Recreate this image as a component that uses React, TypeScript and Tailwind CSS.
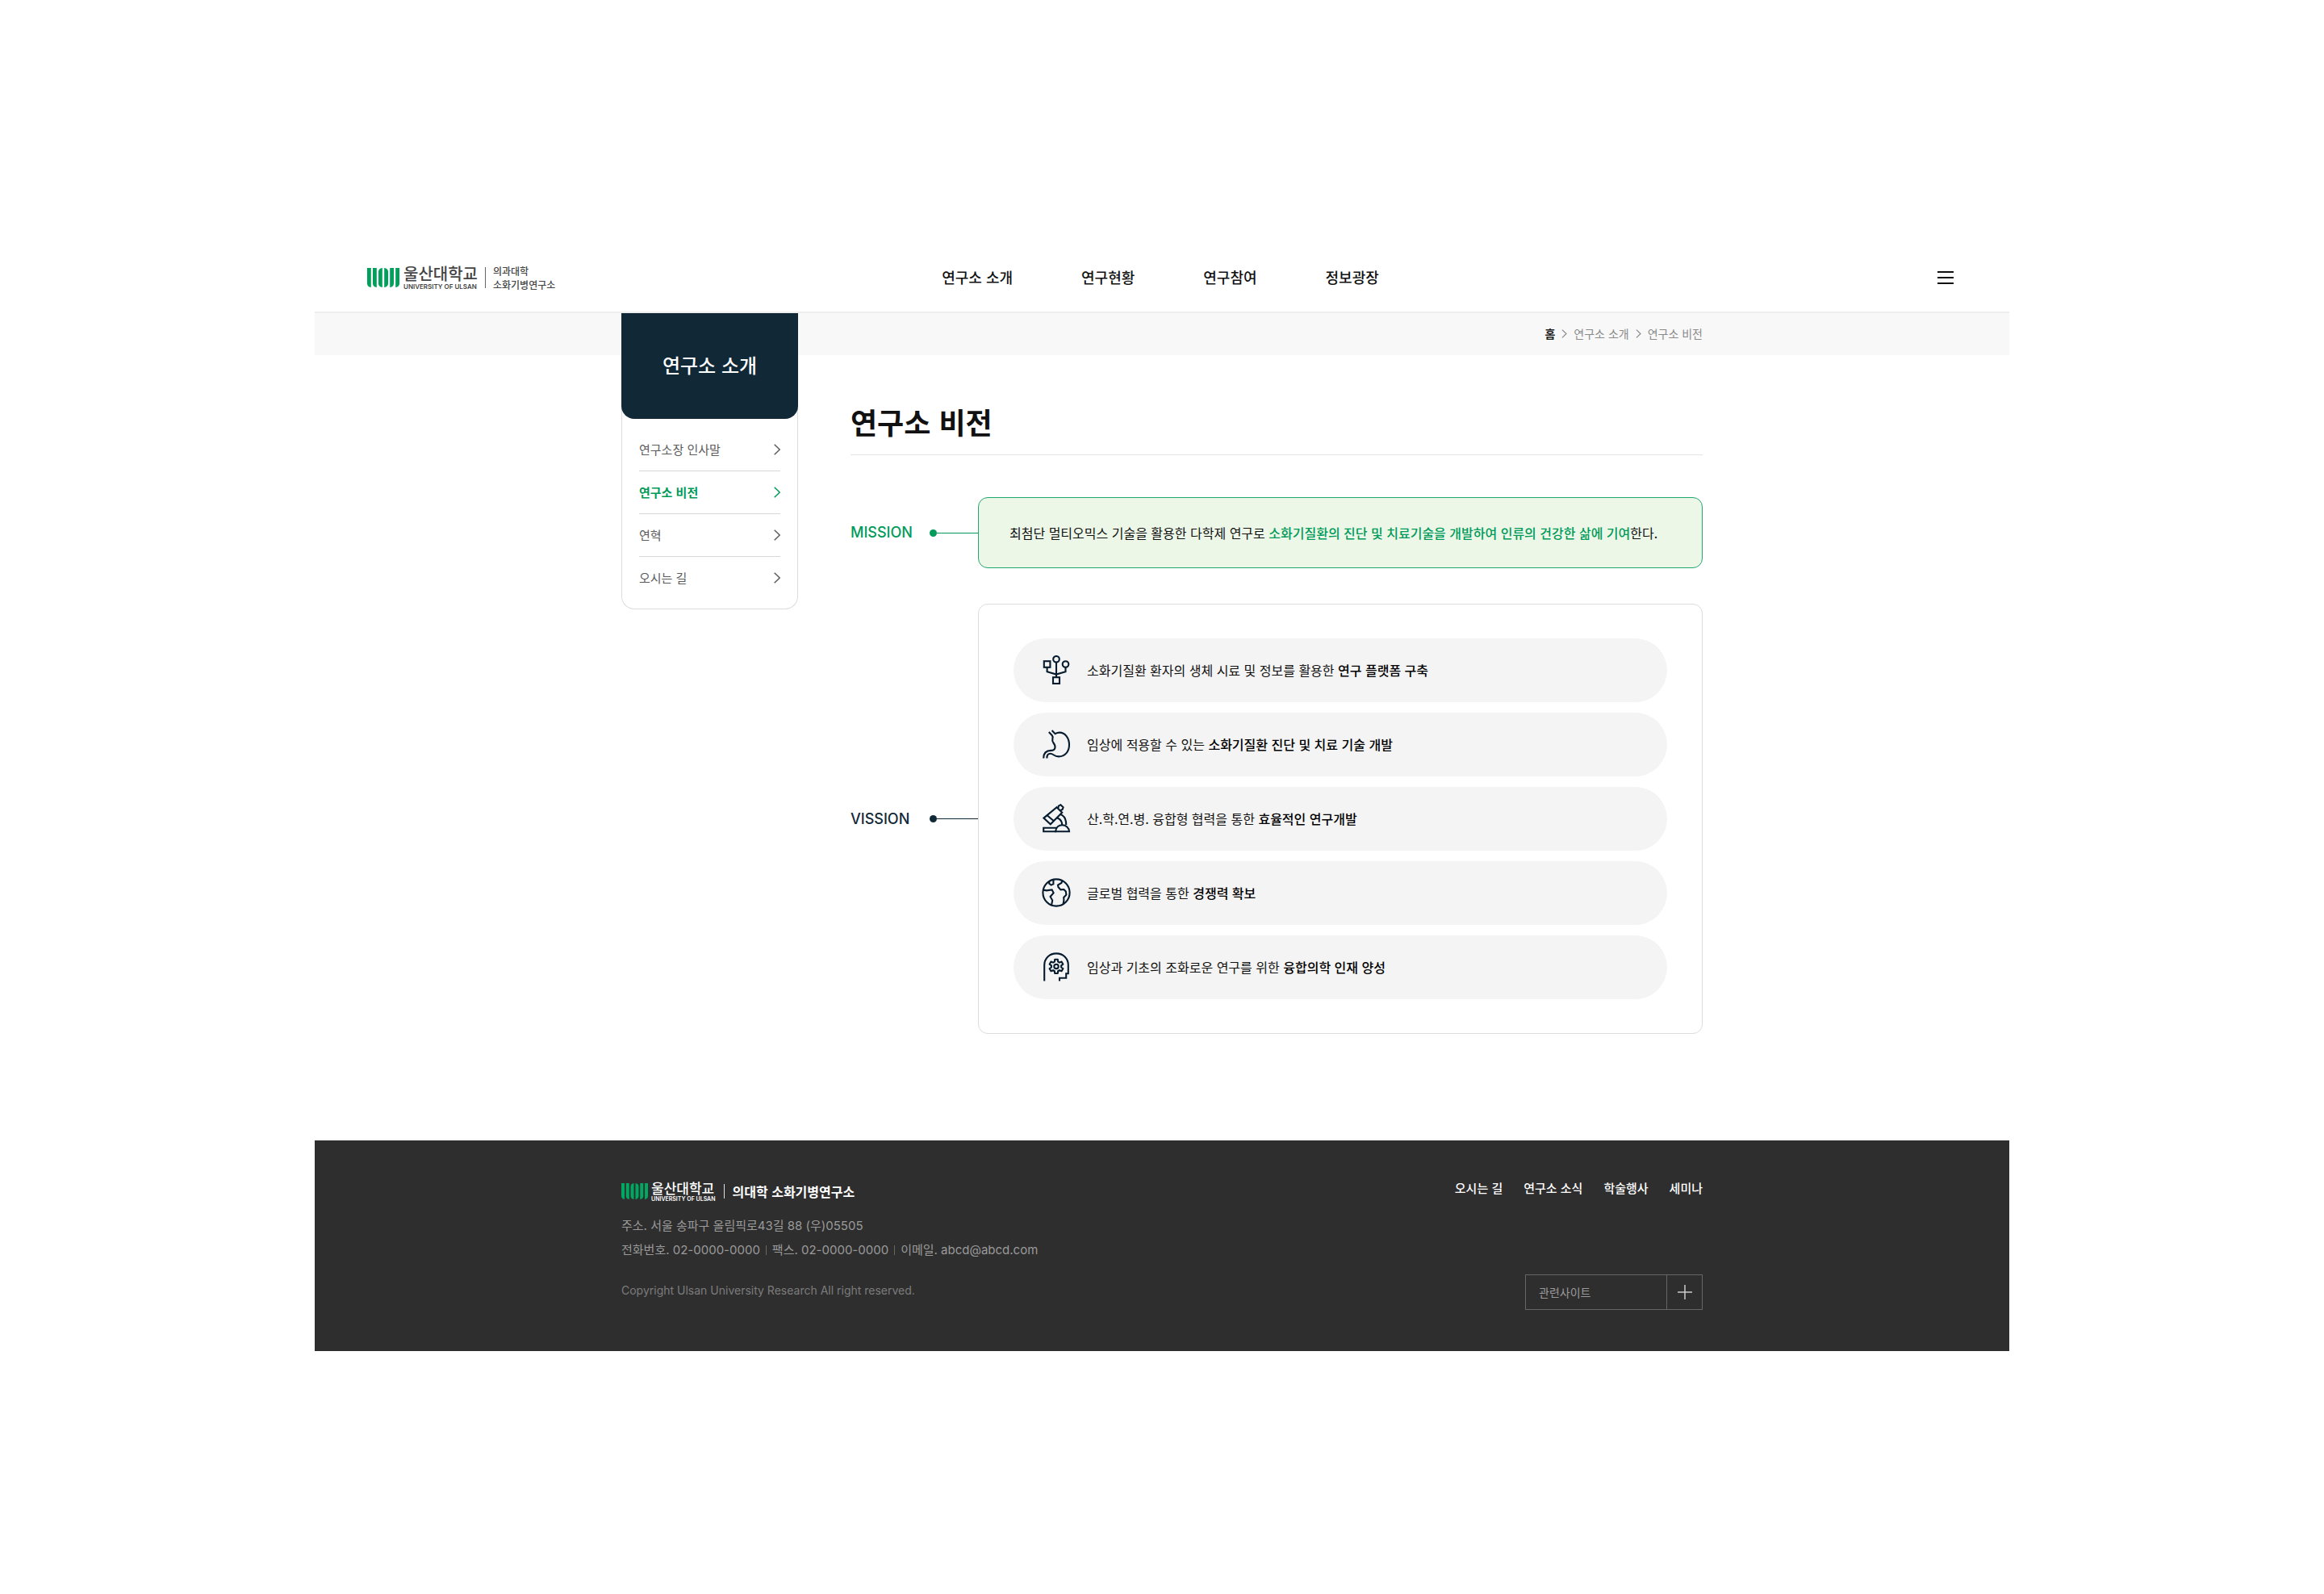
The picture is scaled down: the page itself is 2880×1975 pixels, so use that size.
import React from 'react';

const KR = "font-['Noto_Sans_CJK_KR','Inter',sans-serif]";
const LATIN = "font-['Inter','Noto_Sans_CJK_KR',sans-serif]";

function LogoMark({ className }: { className: string }) {
  return (
    <svg viewBox="0 0 40 24" className={className} fill="currentColor" aria-hidden="true">
      <path d="M0 0H4.8V24C1.6 23.6 0 22 0 19Z" />
      <path d="M7 0H11.8V24C8.6 23.6 7 22 7 19Z" />
      <path d="M18.8 0V24C15.6 23.6 14 22 14 19V5C14 2 15.6 .4 18.8 0Z" />
      <path d="M21.2 0V24C24.4 23.6 26 22 26 19V5C26 2 24.4 .4 21.2 0Z" />
      <path d="M33 0H28.2V24C31.4 23.6 33 22 33 19Z" />
      <path d="M40 0H35.2V24C38.4 23.6 40 22 40 19Z" />
    </svg>
  );
}

function Chevron({ className }: { className: string }) {
  return (
    <svg viewBox="0 0 8 14" className={className} fill="none" stroke="currentColor" strokeWidth="1.5" aria-hidden="true">
      <path d="M.7 .7L7.2 7L.7 13.3" />
    </svg>
  );
}

function IconFrame({ children }: { children: React.ReactNode }) {
  return (
    <svg
      viewBox="0 0 36 36"
      className="size-9 shrink-0 text-[#061c2e]"
      fill="none"
      stroke="currentColor"
      strokeWidth="2.1"
      aria-hidden="true"
    >
      {children}
    </svg>
  );
}

const PlatformIcon = () => (
  <IconFrame>
    <rect x="2.8" y="7.2" width="7.6" height="7.6" />
    <circle cx="18" cy="4.8" r="3.8" />
    <circle cx="29.5" cy="11" r="3.8" />
    <rect x="14" y="27.2" width="8" height="7.8" />
    <path d="M18 8.6V27.2M6.6 14.8V20.2L18 23.6L29.5 20.2V14.8" />
  </IconFrame>
);

const StomachIcon = () => (
  <IconFrame>
    <path d="M12.6 1L16.6 5.2C18.3 4.2 20 3.6 22 3.6C29 3.6 34 10.4 34 18.8C34 27.6 28.4 33.4 21 33.4C15 33.4 14.4 29.8 10.8 29.8C7.6 29.8 6.4 31.6 6.4 35.4" />
    <path d="M8.8 3L12.8 7.2C15.2 10 11.4 12.2 14.2 16C18 20.8 17.2 25.8 11.4 25.9C5.4 26 2.2 28.6 2.2 35.4" />
  </IconFrame>
);

const MicroscopeIcon = () => (
  <IconFrame>
    <path d="M18.6 4.2L25.2 10.8L10.8 25.2L2.4 17.6Z" />
    <path d="M6.4 14L15 21.2" />
    <path d="M20.4 5.2L20.8 2.6L23.4 1.2L26.6 4.2L25.6 7L23.4 8" />
    <path d="M22.8 12.8C28.4 15 30.4 19.4 30.2 26M18.8 17.2C23 18.6 25 21.4 25.2 26" />
    <path d="M17.2 34.2V33.8C17.6 29.2 21 26.2 25.4 26.2C30 26.2 33.6 29.4 34 34.2Z" />
    <path d="M18 29.8H2.2V34.2H18" />
  </IconFrame>
);

const GlobeIcon = () => (
  <IconFrame>
    <circle cx="18" cy="18" r="16.6" />
    <path d="M9.2 4V6.8L11.6 8.6L14.4 7.4V2" />
    <path d="M1.6 14.6L6 15.4L12.6 14.4L14.6 18.4L10.6 23L13.2 27.6L12 33.6" />
    <path d="M25.6 3.2L24.4 6L20 8.6L20.4 11L23.4 14.4L27.4 14L29.8 16.4L30.4 20.6L27.2 24L27.4 27.6L26.6 31.8" />
  </IconFrame>
);

const gearPoints = Array.from({ length: 6 })
  .flatMap((_, i) =>
    [
      [-20, 6.2],
      [-12, 8.8],
      [12, 8.8],
      [20, 6.2],
    ].map(([offset, r]) => {
      const a = ((i * 60 - 90 + offset) * Math.PI) / 180;
      return `${(18 + r * Math.cos(a)).toFixed(2)},${(17.4 + r * Math.sin(a)).toFixed(2)}`;
    }),
  )
  .join(' ');

const TalentIcon = () => (
  <IconFrame>
    <path d="M3.2 35.6V16C3.2 7.4 9.6 1.4 18 1.4C26.6 1.4 32.8 7.4 32.8 15.6V26.2H30.2V31.8H22V35.6" />
    <polygon points={gearPoints} strokeLinejoin="round" />
    <circle cx="18" cy="17.4" r="2.7" />
  </IconFrame>
);

const MENU = ['연구소 소개', '연구현황', '연구참여', '정보광장'];
const SIDE = ['연구소장 인사말', '연구소 비전', '연혁', '오시는 길'];
const VISION = [
  { Icon: PlatformIcon, text: '소화기질환 환자의 생체 시료 및 정보를 활용한', strong: '연구 플랫폼 구축' },
  { Icon: StomachIcon, text: '임상에 적용할 수 있는', strong: '소화기질환 진단 및 치료 기술 개발' },
  { Icon: MicroscopeIcon, text: '산.학.연.병. 융합형 협력을 통한', strong: '효율적인 연구개발' },
  { Icon: GlobeIcon, text: '글로벌 협력을 통한', strong: '경쟁력 확보' },
  { Icon: TalentIcon, text: '임상과 기초의 조화로운 연구를 위한', strong: '융합의학 인재 양성' },
];
const FOOT = ['오시는 길', '연구소 소식', '학술행사', '세미나'];

function Connector({ className }: { className: string }) {
  return (
    <span className={`flex w-[60px] shrink-0 items-center ${className}`} aria-hidden="true">
      <span className="size-[9px] rounded-full bg-current" />
      <span className="h-px flex-1 bg-current" />
    </span>
  );
}

function Header() {
  return (
    <header className="grid h-[88px] grid-cols-[1fr_auto_1fr] items-center border-b-2 border-[#eeeeee] pt-0.5 pr-[69px] pl-[65px]">
      <a href="#" className="flex items-center justify-self-start text-[#444444]">
        <LogoMark className="h-6 w-10 text-[#00a05a]" />
        <span className="ml-[5px] flex flex-col gap-0.5">
          <span className="text-[20px] leading-5 font-medium">울산대학교</span>
          <span className={`${LATIN} text-[8px] leading-[8px] font-semibold`}>UNIVERSITY OF ULSAN</span>
        </span>
        <span className="ml-[9px] h-[26px] w-px bg-[#666666]" />
        <span className="ml-[9px] flex flex-col text-[12px] leading-[17px] font-medium">
          <span>의과대학</span>
          <span>소화기병연구소</span>
        </span>
      </a>
      <nav className="flex gap-[85px] pb-0.5 text-[18px] leading-6 font-medium text-[#111111]">
        {MENU.map((m) => (
          <a key={m} href="#">{m}</a>
        ))}
      </nav>
      <button type="button" aria-label="전체 메뉴" className="flex w-5 flex-col gap-[5px] justify-self-end">
        <span className="h-[2px] bg-[#111111]" />
        <span className="h-[2px] bg-[#111111]" />
        <span className="h-[2px] bg-[#111111]" />
      </button>
    </header>
  );
}

function Breadcrumb() {
  return (
    <div className="bg-[#f8f8f8]">
      <nav
        aria-label="현재 위치"
        className="mx-auto flex h-[52px] max-w-[1340px] items-center justify-end gap-2 pb-0.5 text-[14px] leading-5 text-[#8a8a8a]"
      >
        <a href="#" className="font-bold text-[#222222]">홈</a>
        <Chevron className="h-[11px] w-[7px]" />
        <a href="#">연구소 소개</a>
        <Chevron className="h-[11px] w-[7px]" />
        <a href="#" aria-current="page">연구소 비전</a>
      </nav>
    </div>
  );
}

function Sidebar() {
  return (
    <aside className="-mt-[52px] w-[219px] shrink-0 self-start">
      <h2 className="relative flex h-[131px] items-center justify-center rounded-b-2xl bg-[#112837] pb-1 text-[24px] leading-8 font-medium text-white">
        연구소 소개
      </h2>
      <ul className="-mt-4 rounded-b-2xl border border-t-0 border-[#dcdcdc] px-[21px] pt-7 pb-3">
        {SIDE.map((s, i) => (
          <li key={s} className={i < SIDE.length - 1 ? 'border-b border-[#d8d8d8]' : ''}>
            <a
              href="#"
              className={`flex h-[52px] items-center justify-between text-[15px] leading-5 ${
                i === 1 ? 'font-bold text-[#009a5a]' : 'text-[#5c5c5c]'
              }`}
            >
              {s}
              <Chevron className="h-[14px] w-2" />
            </a>
          </li>
        ))}
      </ul>
    </aside>
  );
}

function Content() {
  return (
    <main className="min-w-0 flex-1 pt-[58px] pb-[132px]">
      <h1 className="border-b border-[#e4e4e4] pb-[17px] text-[36px] leading-[48px] font-bold text-[#111111]">연구소 비전</h1>

      <section className="mt-[52px] flex items-center">
        <h2 className={`${LATIN} w-[98px] shrink-0 text-[18px] leading-6 font-medium text-[#009a5a]`}>MISSION</h2>
        <Connector className="text-[#009a5a]" />
        <p className="flex min-h-[88px] flex-1 items-center rounded-xl border border-[#1fa870] bg-[#ecf7e8] px-[38px] text-[16px] leading-6 text-[#111111]">
          <span>
            최첨단 멀티오믹스 기술을 활용한 다학제 연구로{' '}
            <strong className="font-medium text-[#009a5a]">
              소화기질환의 진단 및 치료기술을 개발하여 인류의 건강한 삶에 기여
            </strong>
            한다.
          </span>
        </p>
      </section>

      <section className="mt-11 flex items-center">
        <h2 className={`${LATIN} w-[98px] shrink-0 text-[18px] leading-6 font-medium text-[#112837]`}>VISSION</h2>
        <Connector className="text-[#112837]" />
        <ul className="flex flex-1 flex-col gap-[13px] rounded-xl border border-[#dcdcdc] px-[43px] py-[42px]">
          {VISION.map(({ Icon, text, strong }) => (
            <li
              key={strong}
              className="flex h-[79px] items-center gap-5 rounded-full bg-[#f4f4f4] pr-9 pb-0.5 pl-[35px] text-[16px] leading-6 text-[#111111]"
            >
              <Icon />
              <span>
                {text} <strong className="font-medium text-black">{strong}</strong>
              </span>
            </li>
          ))}
        </ul>
      </section>
    </main>
  );
}

function Footer() {
  return (
    <footer className="bg-[#2e2e2e]">
      <div className="mx-auto flex max-w-[1340px] justify-between pt-[49px] pb-[51px]">
        <div className="pb-[14px] text-[15px] text-[#9a9a9a]">
          <a href="#" className="flex h-7 items-center text-white">
            <LogoMark className="h-5 w-[33px] text-[#00a862]" />
            <span className="ml-1 flex flex-col gap-px">
              <span className="text-[17px] leading-[18px] font-medium">울산대학교</span>
              <span className={`${LATIN} text-[7px] leading-[7px] font-semibold`}>UNIVERSITY OF ULSAN</span>
            </span>
            <span className="ml-[10px] h-[18px] w-px bg-[#dddddd]" />
            <span className="ml-[10px] text-[16px] leading-6 font-bold">의대학 소화기병연구소</span>
          </a>
          <address className={`${LATIN} mt-[14px] leading-[30px] not-italic`}>
            <p>주소. 서울 송파구 올림픽로43길 88 (우)05505</p>
            <p className="flex items-center gap-[7px]">
              <span>전화번호. 02-0000-0000</span>
              <span className="h-3 w-px bg-[#666666]" />
              <span>팩스. 02-0000-0000</span>
              <span className="h-3 w-px bg-[#666666]" />
              <span>이메일. abcd@abcd.com</span>
            </p>
          </address>
          <p className={`${LATIN} mt-[25px] text-[14px] leading-5 text-[#7c7c7c]`}>
            Copyright Ulsan University Research All right reserved.
          </p>
        </div>

        <div className="flex flex-col items-end justify-between">
          <nav className="flex gap-[26px] text-[15px] leading-5 font-medium text-white">
            {FOOT.map((f) => (
              <a key={f} href="#">{f}</a>
            ))}
          </nav>
          <div className="flex h-11 w-[220px] border border-[#666666]">
            <select
              aria-label="관련사이트"
              className="min-w-0 flex-1 appearance-none bg-transparent pl-4 text-[14px] leading-5 text-[#9a9a9a]"
            >
              <option>관련사이트</option>
            </select>
            <button
              type="button"
              aria-label="관련사이트 열기"
              className="flex w-11 items-center justify-center border-l border-[#666666] text-[#cccccc]"
            >
              <svg viewBox="0 0 18 18" className="size-[18px]" fill="none" stroke="currentColor" strokeWidth="1.5" aria-hidden="true">
                <path d="M9 0V18M0 9H18" />
              </svg>
            </button>
          </div>
        </div>
      </div>
    </footer>
  );
}

export default function App() {
  return (
    <div lang="ko" className={`${KR} min-h-screen bg-white py-[300px]`}>
      <div className="mx-auto max-w-[2100px]">
        <Header />
        <Breadcrumb />
        <div className="mx-auto flex max-w-[1340px] gap-[65px]">
          <Sidebar />
          <Content />
        </div>
        <Footer />
      </div>
    </div>
  );
}
